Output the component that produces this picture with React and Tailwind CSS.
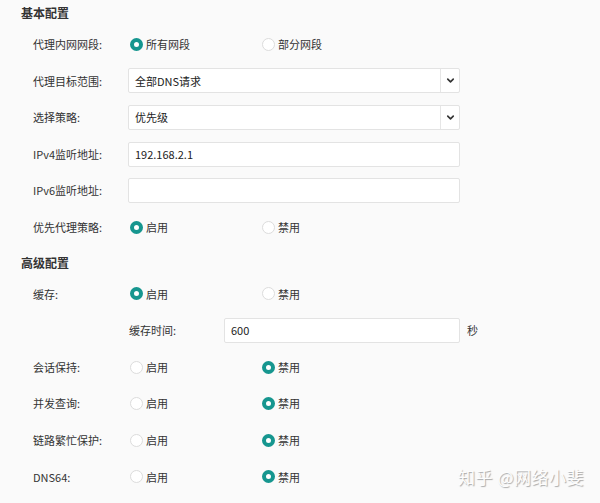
import { ChevronDown } from "lucide-react";

const font = { fontFamily: '"Noto Sans CJK SC", "Noto Sans", sans-serif' };

function Radio({ checked, label }) {
  return (
    <div className="flex items-center gap-[3px]">
      {checked ? (
        <span className="w-[13px] h-[13px] rounded-full border-[4px] border-[#16968f] bg-white" />
      ) : (
        <span className="w-[13px] h-[13px] rounded-full border border-[#dcdcdc] bg-white" />
      )}
      <span>{label}</span>
    </div>
  );
}

function Row({ label, children }) {
  return (
    <div className="h-[36.6px] flex items-center pl-[33px]">
      <div className="w-[95px] shrink-0">{label}</div>
      {children}
    </div>
  );
}

function RadioPair({ first, on = 0 }) {
  return (
    <div className="flex items-center pl-[2px]">
      <div className="w-[132px]">
        <Radio checked={on === 0} label={first[0]} />
      </div>
      <Radio checked={on === 1} label={first[1]} />
    </div>
  );
}

function Field({ value, select, className = "w-[332px]" }) {
  return (
    <div className={`${className} h-[25px] flex bg-white border border-[#e3e3e3] rounded-[2px]`}>
      <div className="flex-1 flex items-center px-[6px] text-[#222]">{value}</div>
      {select && (
        <div className="w-[19px] flex items-center justify-center border-l border-[#e6e6e6]">
          <ChevronDown size={11} strokeWidth={3.5} className="text-[#333]" />
        </div>
      )}
    </div>
  );
}

function Heading({ children, className = "" }) {
  return (
    <div className={`h-[26px] flex items-center pl-[21px] text-[12px] font-bold text-[#333] ${className}`}>
      {children}
    </div>
  );
}

export default function App() {
  const onOff = ["启用", "禁用"];
  return (
    <div className="relative w-[600px] h-[503px] bg-[#fafafa] text-[11px] text-[#333] overflow-hidden" style={font}>
      <Heading>基本配置</Heading>
      <Row label="代理内网网段:">
        <RadioPair first={["所有网段", "部分网段"]} />
      </Row>
      <Row label="代理目标范围:">
        <Field value="全部DNS请求" select />
      </Row>
      <Row label="选择策略:">
        <Field value="优先级" select />
      </Row>
      <Row label="IPv4监听地址:">
        <Field value="192.168.2.1" />
      </Row>
      <Row label="IPv6监听地址:">
        <Field value="" />
      </Row>
      <Row label="优先代理策略:">
        <RadioPair first={onOff} />
      </Row>

      <Heading className="mt-[4px]">高级配置</Heading>
      <Row label="缓存:">
        <RadioPair first={onOff} />
      </Row>
      <Row label="">
        <div className="w-[96px] pl-[1px]">缓存时间:</div>
        <Field value="600" className="w-[236px]" />
        <span className="ml-[7px]">秒</span>
      </Row>
      <Row label="会话保持:">
        <RadioPair first={onOff} on={1} />
      </Row>
      <Row label="并发查询:">
        <RadioPair first={onOff} on={1} />
      </Row>
      <Row label="链路繁忙保护:">
        <RadioPair first={onOff} on={1} />
      </Row>
      <Row label="DNS64:">
        <RadioPair first={onOff} on={1} />
      </Row>

      <div className="absolute right-[16px] bottom-[14px] text-[17px] text-[#fdfdfd] [text-shadow:1px_1px_1px_#a8a8a8] tracking-[0.5px]">
        知乎 @网络小斐
      </div>
    </div>
  );
}
